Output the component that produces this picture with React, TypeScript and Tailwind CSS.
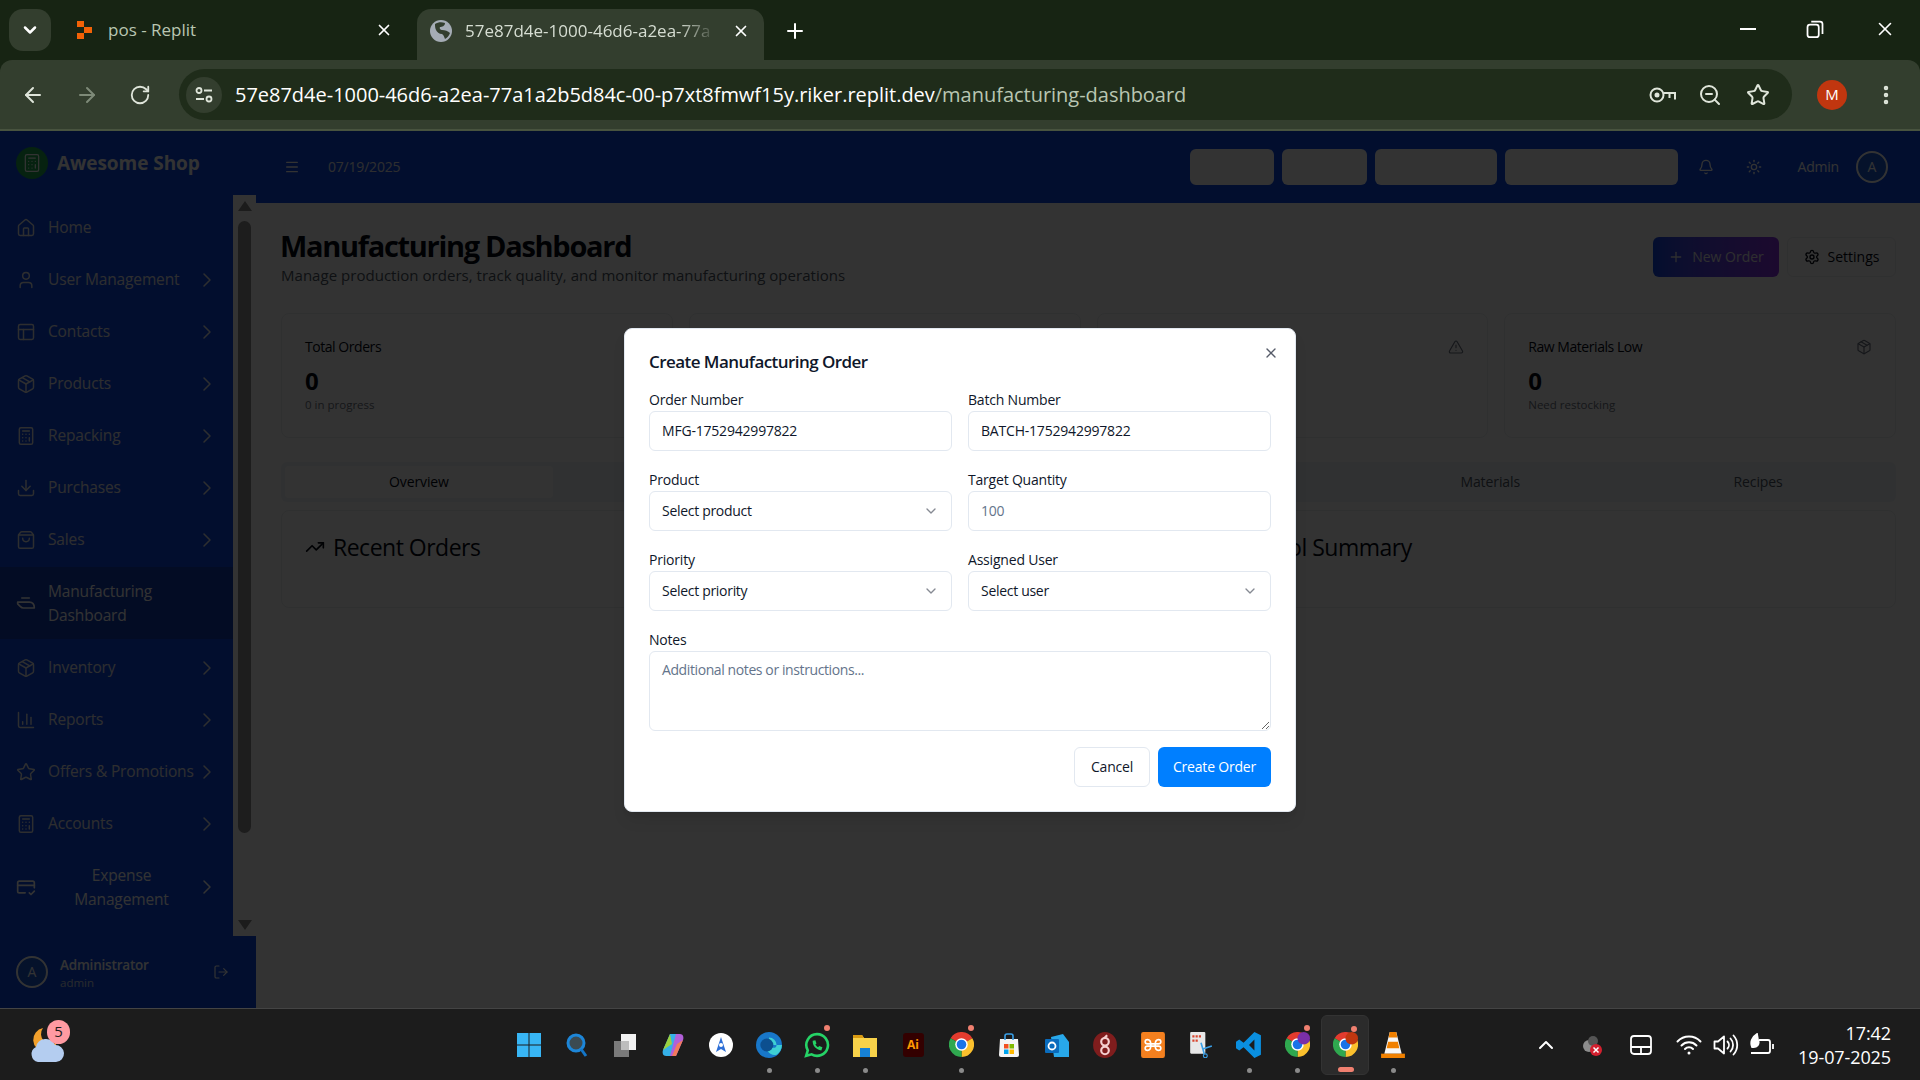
import React from 'react';
import {
  ArrowLeft, ArrowRight, RotateCw, ZoomOut, Star, EllipsisVertical, X, Plus, ChevronDown, ChevronRight,
  Home, User, PanelsTopLeft, Package, Calculator, Download, ShoppingBag, BarChart3, LogOut,
  Bell, Sun, Menu, Settings, TrendingUp, TriangleAlert, ChevronUp,
} from 'lucide-react';

const ExpenseIcon = ({ className }: { className?: string }) => (
  <svg viewBox="0 0 24 24" fill="none" stroke="currentColor" strokeWidth="2" strokeLinecap="round" strokeLinejoin="round" className={className}>
    <path d="M11 19H4a2 2 0 0 1-2-2V7a2 2 0 0 1 2-2h16a2 2 0 0 1 2 2v6" />
    <path d="M2 10h20" />
    <path d="m16 19 2 2 4-4" />
  </svg>
);

// Iron-like glyph used for the manufacturing entry
const ManufacturingIcon = ({ className }: { className?: string }) => (
  <svg viewBox="0 0 24 24" fill="none" stroke="currentColor" strokeWidth="2" strokeLinecap="round" strokeLinejoin="round" className={className}>
    <path d="M7 6h9" />
    <path d="M2 11h14c4 0 6 3 6 7H9c-2 0-3-1-4-2l-3-3z" />
  </svg>
);

const navItems = [
  { label: 'Home', icon: Home, arrow: false },
  { label: 'User Management', icon: User, arrow: true },
  { label: 'Contacts', icon: PanelsTopLeft, arrow: true },
  { label: 'Products', icon: Package, arrow: true },
  { label: 'Repacking', icon: Calculator, arrow: true },
  { label: 'Purchases', icon: Download, arrow: true },
  { label: 'Sales', icon: ShoppingBag, arrow: true },
];

const navItemsBelow = [
  { label: 'Inventory', icon: Package },
  { label: 'Reports', icon: BarChart3 },
  { label: 'Offers & Promotions', icon: Star },
  { label: 'Accounts', icon: Calculator },
];

function NavRow({ label, icon: Icon, arrow = true }: { label: string; icon: any; arrow?: boolean }) {
  return (
    <div className="flex h-[50px] shrink-0 items-center pl-4 pr-[14px] text-[#e5e7eb]">
      <Icon className="mr-3 h-5 w-5 shrink-0" strokeWidth={1.75} />
      <span className="flex-1 whitespace-nowrap text-[15.5px] tracking-[-0.15px]">{label}</span>
      {arrow && <ChevronRight className="h-6 w-6 shrink-0" strokeWidth={1.5} />}
    </div>
  );
}

function Sidebar() {
  return (
    <aside className="flex h-full w-64 shrink-0 flex-col bg-[#0b49e6] text-white">
      <div className="flex h-16 shrink-0 items-center gap-[9px] pl-4">
        <div className="flex h-8 w-8 items-center justify-center rounded-full bg-[#1fa84f]">
          <Calculator className="h-5 w-5" strokeWidth={1.5} />
        </div>
        <span className="text-[19px] font-bold tracking-[-0.05px]">Awesome Shop</span>
      </div>
      <div className="flex min-h-0 flex-1">
        <nav className="flex w-[233px] flex-col gap-[2px] pt-2">
          {navItems.map((n) => (
            <NavRow key={n.label} {...n} />
          ))}
          <div className="mb-[2px] flex h-[72px] shrink-0 items-center bg-[#0f3cb4] pl-4 pr-4">
            <ManufacturingIcon className="mr-3 h-5 w-5 shrink-0" />
            <span className="text-[15.5px] leading-6 tracking-[-0.15px]">Manufacturing<br />Dashboard</span>
          </div>
          {navItemsBelow.map((n) => (
            <NavRow key={n.label} label={n.label} icon={n.icon} />
          ))}
          <div className="flex h-[72px] shrink-0 items-center pl-4 pr-[14px]">
            <ExpenseIcon className="mr-3 h-5 w-5 shrink-0" />
            <span className="flex-1 text-center text-[15.5px] leading-6 tracking-[-0.15px]">Expense<br />Management</span>
            <ChevronRight className="h-6 w-6 shrink-0" strokeWidth={1.5} />
          </div>
        </nav>
        <div className="flex w-[23px] flex-col items-center bg-[#fff] py-[6px]">
          <div className="h-0 w-0 border-x-[7px] border-b-[10px] border-x-transparent border-b-[#8a8a8a]" />
          <div className="mt-[10px] h-[612px] w-[13px] rounded-full bg-[#8f8f8f]" />
          <div className="mt-auto h-0 w-0 border-x-[7px] border-t-[10px] border-x-transparent border-t-[#8a8a8a]" />
        </div>
      </div>
      <div className="flex h-[72px] shrink-0 items-center pl-4 pr-[27px]">
        <div className="flex h-8 w-8 items-center justify-center rounded-full border-2 border-white bg-[#1a5bd6] text-sm">A</div>
        <div className="ml-3 flex-1 pt-[2px]">
          <div className="text-[13.5px] font-semibold leading-5 tracking-[-0.2px]">Administrator</div>
          <div className="text-[11.5px] leading-4 text-[#cbd5e1]">admin</div>
        </div>
        <LogOut className="h-4 w-4" strokeWidth={1.75} />
      </div>
    </aside>
  );
}

function Dashboard() {
  return (
    <main className="flex min-w-0 flex-1 flex-col bg-white text-[#030712]">
      <header className="flex h-[72px] shrink-0 items-center bg-[#0b49e6] pl-[28px] pr-8 text-white">
        <Menu className="h-4 w-4" />
        <span className="ml-[28px] text-sm tracking-[-0.2px] text-[#e5e7eb]">07/19/2025</span>
        <div className="ml-auto flex items-center gap-2">
          <div className="h-9 w-[84px] rounded-md bg-white" />
          <div className="h-9 w-[85px] rounded-md bg-white" />
          <div className="h-9 w-[122px] rounded-md bg-white" />
          <div className="h-9 w-[173px] rounded-md bg-white" />
        </div>
        <Bell className="ml-5 h-4 w-4" />
        <Sun className="ml-8 h-4 w-4" />
        <span className="ml-9 text-sm tracking-[-0.2px]">Admin</span>
        <div className="ml-[17px] flex h-8 w-8 items-center justify-center rounded-full border-2 border-white bg-[#1a5bd6] text-sm">A</div>
      </header>
      <div className="flex-1 pl-[25px] pr-6 pt-[26px]">
        <div className="flex items-start justify-between">
          <div>
            <h1 className="-ml-[1px] text-[29px] font-bold leading-[34px] tracking-[-1.3px]">Manufacturing Dashboard</h1>
            <p className="mt-[2px] text-[15px] leading-5 tracking-[0.03px] text-[#4b5563]">Manage production orders, track quality, and monitor manufacturing operations</p>
          </div>
          <div className="mt-[8px] flex gap-2">
            <button className="flex h-10 w-[126px] items-center justify-center gap-2 rounded-md bg-gradient-to-r from-[#0b49e6] to-[#8b2fe6] text-sm text-[#e5e7eb]">
              <Plus className="h-4 w-4" /> New Order
            </button>
            <button className="flex h-10 w-[109px] items-center justify-center gap-2 rounded-md border border-[#eceef1] text-sm">
              <Settings className="h-4 w-4" /> Settings
            </button>
          </div>
        </div>
        <div className="mt-[28px] grid grid-cols-4 gap-4">
          <div className="h-[125px] rounded-lg border border-[#eceef1] px-[23px] pt-[23px]">
            <div className="text-sm font-medium leading-5 tracking-[-0.45px]">Total Orders</div>
            <div className="mt-2 text-2xl font-bold leading-8">0</div>
            <div className="text-[11.5px] leading-4 text-[#6b7280]">0 in progress</div>
          </div>
          <div className="h-[125px] rounded-lg border border-[#eceef1]" />
          <div className="flex h-[125px] justify-end rounded-lg border border-[#eceef1] px-[23px] pt-[25px]">
            <TriangleAlert className="h-4 w-4 text-[#6b7280]" strokeWidth={1.75} />
          </div>
          <div className="h-[125px] rounded-lg border border-[#eceef1] px-[23px] pt-[23px]">
            <div className="flex items-center justify-between">
              <span className="text-sm font-medium leading-5 tracking-[-0.45px]">Raw Materials Low</span>
              <Package className="h-4 w-4 text-[#6b7280]" strokeWidth={1.75} />
            </div>
            <div className="mt-2 text-2xl font-bold leading-8">0</div>
            <div className="text-[11.5px] leading-4 text-[#6b7280]">Need restocking</div>
          </div>
        </div>
        <div className="mt-6 grid h-10 grid-cols-6 rounded-md bg-[#f1f5f9] p-1 text-sm font-medium tracking-[-0.1px] text-[#4b5563]">
          <div className="flex items-center justify-center rounded-sm bg-white text-[#030712]">Overview</div>
          <div />
          <div />
          <div />
          <div className="flex items-center justify-center">Materials</div>
          <div className="flex items-center justify-center">Recipes</div>
        </div>
        <div className="mt-2 grid grid-cols-2 gap-6">
          {['Recent Orders', 'Quality Control Summary'].map((t) => (
            <div key={t} className="flex h-[98px] items-start gap-2 rounded-lg border border-[#eceef1] px-[23px] pt-[20px]">
              <TrendingUp className="mt-[6px] h-5 w-5" />
              <span className="text-[23px] font-medium leading-8 tracking-[-0.5px]">{t}</span>
            </div>
          ))}
        </div>
      </div>
    </main>
  );
}

function Field({ label, children }: { label: string; children: React.ReactNode }) {
  return (
    <div>
      <label className="block pt-[1px] text-sm font-medium leading-[23px] tracking-[-0.2px]">{label}</label>
      {children}
    </div>
  );
}

const inputCls = 'block h-10 w-full rounded-md border border-[#e2e8f0] bg-white px-3 text-sm tracking-[-0.2px] text-[#0f172a] placeholder:text-[#64748b] outline-none';

function SelectBox({ text }: { text: string }) {
  return (
    <button className="flex h-10 w-full items-center justify-between rounded-md border border-[#e2e8f0] bg-white px-3 text-sm tracking-[-0.3px] text-[#0f172a]">
      {text}
      <ChevronDown className="h-4 w-4 opacity-50" />
    </button>
  );
}

function OrderDialog() {
  return (
    <div className="absolute inset-0 flex items-center justify-center bg-black/80">
      <div className="relative w-[672px] rounded-lg border border-[#e2e8f0] bg-white p-6 text-[#0f172a] shadow-lg">
        <button className="absolute right-4 top-4 text-[#0f172a] opacity-70">
          <X className="h-4 w-4" />
        </button>
        <h2 className="text-[17px] font-semibold leading-[18px] tracking-[-0.55px]">Create Manufacturing Order</h2>
        <div className="mt-4 grid grid-cols-2 gap-4">
          <Field label="Order Number">
            <input readOnly value="MFG-1752942997822" className={inputCls} />
          </Field>
          <Field label="Batch Number">
            <input readOnly value="BATCH-1752942997822" className={inputCls} />
          </Field>
          <Field label="Product">
            <SelectBox text="Select product" />
          </Field>
          <Field label="Target Quantity">
            <input readOnly placeholder="100" className={inputCls} />
          </Field>
          <Field label="Priority">
            <SelectBox text="Select priority" />
          </Field>
          <Field label="Assigned User">
            <SelectBox text="Select user" />
          </Field>
        </div>
        <div className="mt-4">
          <Field label="Notes">
            <textarea readOnly placeholder="Additional notes or instructions..." className="block h-20 w-full rounded-md border border-[#e2e8f0] bg-white px-3 py-2 text-sm tracking-[-0.4px] placeholder:text-[#64748b] outline-none" />
          </Field>
        </div>
        <div className="mt-4 flex justify-end gap-2">
          <button className="h-10 w-[76px] rounded-md border border-[#e2e8f0] bg-white text-sm font-medium tracking-[-0.2px]">Cancel</button>
          <button className="h-10 w-[113px] rounded-md bg-[#007fff] text-sm font-medium tracking-[-0.2px] text-white">Create Order</button>
        </div>
      </div>
    </div>
  );
}

function KeyIcon() {
  return (
    <svg viewBox="0 0 28 20" className="h-[20px] w-[28px]" fill="none" stroke="currentColor" strokeWidth="2">
      <circle cx="8" cy="10" r="6.5" />
      <circle cx="8" cy="10" r="1.5" fill="currentColor" />
      <path d="M14.5 8H26v6.5M20.5 8v5" />
    </svg>
  );
}

function BrowserChrome() {
  return (
    <div className="shrink-0 bg-[#172413]">
      <div className="flex h-[60px] items-end pl-[9px]">
        <div className="mb-[9px] flex h-[42px] w-[42px] items-center justify-center rounded-[14px] bg-[#333e2e] text-white">
          <ChevronDown className="h-5 w-5" strokeWidth={3} />
        </div>
        <div className="mb-[9px] ml-[26px] flex h-[42px] w-[340px] items-center text-[#b9c6b2]">
          <svg viewBox="0 0 15 18" className="h-[18px] w-[15px]">
            <path d="M0 0h7v6H0zM7 6h8v6H7zM0 12h7v6H0z" fill="#f26207" />
          </svg>
          <span className="ml-4 flex-1 text-[17px]">pos - Replit</span>
          <X className="mr-[24px] h-[18px] w-[18px] text-white" strokeWidth={2.25} />
        </div>
        <div className="flex h-[51px] w-[347px] items-center rounded-t-[14px] bg-[#333e2e] pb-[8px] pl-[13px] text-white">
          <svg viewBox="0 0 22 22" className="h-[22px] w-[22px]">
            <circle cx="11" cy="11" r="11" fill="#a5acb5" />
            <path d="M5 4c3-2 7-2 10-1 0 3-3 4-5 4-1 2 1 3 2 3 3 0 6 1 8 3-1 3-3 5-5 6-1-2-1-4-3-5-3 0-5-2-6-4-1-2-1-4-1-6z" fill="#333e2e" />
          </svg>
          <span className="ml-[13px] w-[252px] overflow-hidden whitespace-nowrap text-[17px] text-[#d6ddd2] [mask-image:linear-gradient(to_right,black_85%,transparent)]">57e87d4e-1000-46d6-a2ea-77a</span>
          <X className="ml-[15px] h-[18px] w-[18px]" strokeWidth={2.25} />
        </div>
        <Plus className="mb-[17px] ml-[19px] h-6 w-6 text-white" strokeWidth={2} />
        <div className="mb-[20px] ml-auto flex items-center gap-[49px] pr-[24px] text-white">
          <div className="h-[2px] w-[16px] bg-white" />
          <svg viewBox="0 0 16 16" className="h-[20px] w-[20px]" fill="none" stroke="currentColor" strokeWidth="1.4">
            <rect x="2" y="4.5" width="9" height="10" rx="2" />
            <path d="M5 2h7a2 2 0 0 1 2 2v8" />
          </svg>
          <X className="h-[22px] w-[22px]" strokeWidth={1.75} />
        </div>
      </div>
      <div className="flex h-[71px] items-center rounded-tl-[12px] rounded-tr-[12px] border-b-2 border-[#48533f] bg-[#333e2e] text-[#dfe5da]">
        <ArrowLeft className="ml-[21px] h-6 w-6" strokeWidth={2} />
        <ArrowRight className="ml-[30px] h-6 w-6 text-[#7e8a78]" strokeWidth={2} />
        <RotateCw className="ml-[30px] h-[22px] w-[22px]" strokeWidth={2} />
        <div className="ml-[28px] flex h-[51px] w-[1613px] items-center rounded-full bg-[#1f2c1a] pl-[7px] pr-[22px]">
          <div className="flex h-9 w-9 items-center justify-center rounded-full bg-[#333e2e]">
            <svg viewBox="0 0 18 16" className="h-4 w-[18px]" fill="none" stroke="currentColor" strokeWidth="1.8">
              <circle cx="4" cy="3.5" r="2.5" />
              <path d="M9 3.5h8M1 12h8" />
              <circle cx="14" cy="12" r="2.5" />
            </svg>
          </div>
          <div className="ml-[13px] flex-1 whitespace-nowrap text-[20px] tracking-[-0.02px] text-[#b9c6b2]">
            <span className="text-white">57e87d4e-1000-46d6-a2ea-77a1a2b5d84c-00-p7xt8fmwf15y.riker.replit.dev</span>/manufacturing-dashboard
          </div>
          <KeyIcon />
          <ZoomOut className="ml-[21px] h-[24px] w-[24px]" strokeWidth={2} />
          <Star className="ml-[24px] h-[24px] w-[24px]" strokeWidth={2} />
        </div>
        <div className="ml-[25px] flex h-[30px] w-[30px] items-center justify-center rounded-full bg-[#c1360f] text-[15px] text-white">M</div>
        <EllipsisVertical className="ml-[27px] h-6 w-6" strokeWidth={2.5} />
      </div>
    </div>
  );
}

function Chrome({ badge }: { badge?: string }) {
  return (
    <svg viewBox="0 0 24 24" className="h-[25px] w-[25px]">
      <path d="M12 12L1.6 6A12 12 0 0 1 22.4 6Z" fill="#e33b2e" />
      <path d="M12 12L22.4 6A12 12 0 0 1 12 24Z" fill="#fbc02d" />
      <path d="M12 12L12 24A12 12 0 0 1 1.6 6Z" fill="#2fa84f" />
      <circle cx="12" cy="12" r="6" fill="#fff" />
      <circle cx="12" cy="12" r="4.6" fill="#1a73e8" />
      {badge && <circle cx="18" cy="6" r="6" fill={badge} />}
    </svg>
  );
}

const taskIcons: { icon: React.ReactNode; dot?: boolean; notify?: boolean; active?: boolean }[] = [
  { icon: <svg viewBox="0 0 24 24" className="h-6 w-6"><path d="M0 0h11.5v11.5H0zM12.5 0H24v11.5H12.5zM0 12.5h11.5V24H0zM12.5 12.5H24V24H12.5z" fill="#38b6f5" /></svg> },
  { icon: <svg viewBox="0 0 24 24" className="h-6 w-6" fill="none"><circle cx="11" cy="10" r="8" stroke="#1d86d8" strokeWidth="3" fill="#3b4a52" /><path d="M16 16l5 7" stroke="#1476c8" strokeWidth="3" /></svg> },
  { icon: <svg viewBox="0 0 24 24" className="h-6 w-6"><rect x="8" y="1" width="15" height="16" fill="#f2f2f2" /><rect x="1" y="8" width="15" height="16" fill="#7a7a7a" /><rect x="8" y="8" width="8" height="9" fill="#bdbdbd" /></svg> },
  { icon: <svg viewBox="0 0 24 24" className="h-6 w-6"><path d="M9 1h7l-5 22H5C2 23 1 20 2 17z" fill="#35b0e8" /><path d="M2 17L9 1l2 10z" fill="#9bd13f" /><path d="M15 23H9l6-22h4c3 0 4 3 3 6z" fill="#b25fd8" /><path d="M22 7l-7 16h-4l5-12z" fill="#f27a5c" /></svg> },
  { icon: <svg viewBox="0 0 24 24" className="h-6 w-6"><circle cx="12" cy="12" r="12" fill="#fff" /><path d="M12 4l5 15-5-3-5 3z" fill="#2d6fd6" /><circle cx="12" cy="12" r="2" fill="#fff" /></svg> },
  { icon: <svg viewBox="0 0 24 24" className="h-[26px] w-[26px]"><circle cx="12" cy="12" r="12" fill="#1877c9" /><path d="M12 5a7 7 0 0 1 7 7c0 3-3 3-5 2-2-1-4 1-3 4a8 8 0 0 0 8 3 12 12 0 0 0 5-9H12z" fill="#3ecfd3" /><circle cx="10" cy="12" r="6" fill="#0c4f8f" /></svg>, dot: true },
  { icon: <svg viewBox="0 0 24 24" className="h-[26px] w-[26px]" fill="none"><path d="M12 2a10 10 0 0 0-8.5 15L2 22l5-1.4A10 10 0 1 0 12 2z" stroke="#25d366" strokeWidth="2.4" /><path d="M8 8c0 5 3 8 8 9l1-3-3-1-1 1c-1-.5-2-1.5-2.5-2.5l1-1-1-3z" fill="#25d366" /></svg>, dot: true, notify: true },
  { icon: <svg viewBox="0 0 24 24" className="h-6 w-6"><path d="M0 2h9l2 3h13v19H0z" fill="#f8d24a" /><path d="M0 2h9l2 3H0z" fill="#d99a12" /><path d="M7 15h10v9H7z" fill="#1681d6" /></svg>, dot: true },
  { icon: <div className="flex h-[24px] w-[21px] items-center justify-center rounded-[3px] bg-[#330000] text-[12px] font-bold text-[#ff9a00]">Ai</div> },
  { icon: <Chrome />, dot: true, notify: true },
  { icon: <svg viewBox="0 0 24 24" className="h-6 w-6"><path d="M3 6h18l1 16a2 2 0 0 1-2 2H4a2 2 0 0 1-2-2z" fill="#f5f5f5" /><path d="M8 7V3a2 2 0 0 1 2-2h4a2 2 0 0 1 2 2v4" stroke="#3aa0e8" strokeWidth="1.6" fill="none" /><path d="M7 11h4.5v4.5H7z" fill="#f25022" /><path d="M12.5 11H17v4.5h-4.5z" fill="#7fba00" /><path d="M7 16.500h4.500V21H7z" fill="#00a4ef" /><path d="M12.500 16.500H17V21h-4.500z" fill="#ffb900" /></svg> },
  { icon: <svg viewBox="0 0 24 24" className="h-6 w-6"><path d="M6 4l12-3 6 8v15H9z" fill="#28a8ea" /><rect x="0" y="6" width="14" height="14" rx="1" fill="#0a6cbd" /><circle cx="7" cy="13" r="3.500" fill="none" stroke="#fff" strokeWidth="1.800" /></svg> },
  { icon: <svg viewBox="0 0 24 24" className="h-[26px] w-[26px]" fill="none"><ellipse cx="12" cy="12" rx="11" ry="12" fill="#7f1d1d" /><circle cx="12" cy="9" r="3.500" stroke="#f5d0d0" strokeWidth="2" /><circle cx="12" cy="17" r="3.500" stroke="#f5d0d0" strokeWidth="2" /><path d="M14 3l-3 3" stroke="#f5d0d0" strokeWidth="2" /></svg> },
  { icon: <svg viewBox="0 0 24 24" className="h-[26px] w-[26px]" fill="none"><rect x="1" y="0" width="22" height="24" rx="2" fill="#f4801f" /><path d="M7 7c-3 0-3 4 0 4h10c3 0 3-4 0-4-2 0-3 2-3 5s1 5 3 5c3 0 3-4 0-4H7c-3 0-3 4 0 4 2 0 3-2 3-5s-1-5-3-5z" stroke="#fff" strokeWidth="1.500" /></svg> },
  { icon: <svg viewBox="0 0 24 24" className="h-[26px] w-[26px]" fill="none"><rect x="2" y="0" width="14" height="20" rx="1" fill="#e8e8e8" /><path d="M4 3h2v2H4zM7 3h2v2H7zM10 3h2v2h-2zM4 7h2v2H4zM7 7h2v2H7z" fill="#d9452f" /><path d="M12 10l3 10M22 13l-9 3" stroke="#3aa0e8" strokeWidth="1.500" /><circle cx="16" cy="22" r="1.800" stroke="#3aa0e8" /></svg> },
  { icon: <svg viewBox="0 0 24 24" className="h-[26px] w-[26px]"><path d="M17 0l6 3v18l-6 3L7 14l-4 3-3-2V9l3-2 4 3zM17 7l-5 5 5 5z" fill="#0a8fe0" /></svg>, dot: true },
  { icon: <Chrome badge="#7b2fa8" />, dot: true, notify: true },
  { icon: <Chrome badge="#c1360f" />, active: true, notify: true },
  { icon: <svg viewBox="0 0 24 24" className="h-[26px] w-[26px]"><path d="M9 0h6l5 20H4z" fill="#f7f7f7" /><path d="M9 0h6l1 5H8zM7.500 9h9l1.300 6H6.200z" fill="#f08000" /><path d="M1 20h22v4H1z" fill="#f08000" /></svg>, dot: true },
];

function Taskbar() {
  return (
    <div className="flex h-[72px] shrink-0 items-center border-t border-[#444] bg-[#1c1c1c] text-white">
      <div className="relative ml-[29px] h-[38px] w-[36px]">
        <svg viewBox="0 0 36 38" className="h-[38px] w-[36px]">
          <path d="M14 2a12 12 0 1 0 14 14A10 10 0 0 1 14 2z" fill="#f2a02c" />
          <path d="M9 36a8 8 0 0 1-2-15 10 10 0 0 1 19-2 8.500 8.500 0 0 1 1 17z" fill="#b4cdf0" />
        </svg>
        <div className="absolute -top-[6px] left-[18px] flex h-[24px] w-[23px] items-center justify-center rounded-full bg-[#ff9aa2] text-[15px] text-[#1c1c1c]">5</div>
      </div>
      <div className="ml-[440px] flex h-full items-center">
        {taskIcons.map((t, i) => (
          <div key={i} className={`relative flex h-[60px] w-12 items-center justify-center rounded-md ${t.active ? 'border border-[#333] bg-[#2b2b2b]' : ''}`}>
            {t.icon}
            {t.notify && <div className="absolute right-[11px] top-[10px] h-[6px] w-[6px] rounded-full bg-[#f08070]" />}
            {t.dot && <div className="absolute bottom-[2px] left-[22px] h-[5px] w-[5px] rounded-full bg-[#8a8a8a]" />}
            {t.active && <div className="absolute bottom-[2px] left-[16px] h-[5px] w-[16px] rounded-full bg-[#f08070]" />}
          </div>
        ))}
      </div>
      <div className="ml-auto flex items-center pr-[29px]">
        <ChevronUp className="mr-[22px] h-6 w-6" strokeWidth={2} />
        <svg viewBox="0 0 24 24" className="mr-[25px] h-6 w-6">
          <circle cx="9" cy="13" r="6" fill="#8c8c8c" />
          <circle cx="13" cy="8" r="5" fill="#555" />
          <circle cx="16" cy="17" r="6" fill="#d3202f" />
          <path d="M13.500 14.500l5 5M18.500 14.500l-5 5" stroke="#fff" strokeWidth="1.500" />
        </svg>
        <svg viewBox="0 0 24 24" className="mr-[23px] h-6 w-6" fill="none" stroke="currentColor" strokeWidth="1.800">
          <rect x="2" y="3" width="20" height="18" rx="3" />
          <path d="M2 14h20M12 14v7" />
        </svg>
        <svg viewBox="0 0 26 22" className="mr-[11px] h-[22px] w-[26px]" fill="none" stroke="currentColor" strokeWidth="2" strokeLinecap="round">
          <path d="M1.500 7.500a16 16 0 0 1 23 0" />
          <path d="M5.500 11.500a10.500 10.500 0 0 1 15 0" />
          <path d="M9 15a5.500 5.500 0 0 1 8 0" />
          <circle cx="13" cy="19" r="1.500" fill="currentColor" stroke="none" />
        </svg>
        <svg viewBox="0 0 26 24" className="mr-[9px] h-6 w-[26px]" fill="none" stroke="currentColor" strokeWidth="1.800" strokeLinecap="round" strokeLinejoin="round">
          <path d="M1.500 8.500v7h3.500l6 5v-17l-6 5z" />
          <path d="M14.500 8.500a5 5 0 0 1 0 7" />
          <path d="M17.500 5.500a9.500 9.500 0 0 1 0 13" />
          <path d="M20.500 2.500a14 14 0 0 1 0 19" />
        </svg>
        <svg viewBox="0 0 26 24" className="mr-[24px] h-6 w-[26px]" fill="none" stroke="currentColor" strokeWidth="1.800">
          <path d="M11 7h9a2 2 0 0 1 2 2v9a2 2 0 0 1-2 2H3" />
          <path d="M25 11v5" />
          <path d="M9 1c-5 3-7 8-5 13 5 1 8-3 6-7z" fill="#fff" />
        </svg>
        <div className="text-right text-[18px] leading-6 tracking-[-0.1px]">
          <div>17:42</div>
          <div>19-07-2025</div>
        </div>
      </div>
    </div>
  );
}

export default function App() {
  return (
    <div className="flex h-screen w-[1920px] flex-col overflow-hidden font-['Open_Sans',sans-serif]">
      <BrowserChrome />
      <div className="relative flex min-h-0 flex-1">
        <Sidebar />
        <Dashboard />
        <OrderDialog />
      </div>
      <Taskbar />
    </div>
  );
}
